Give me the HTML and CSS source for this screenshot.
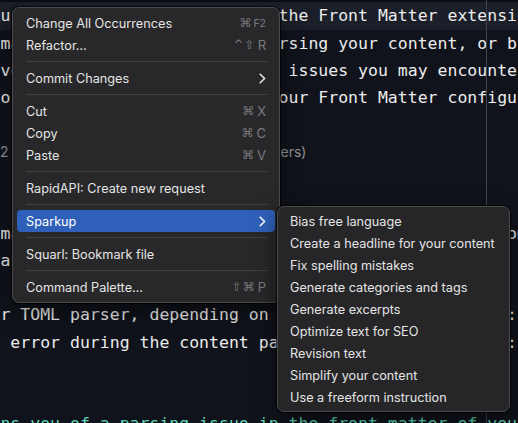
FILE: index.html
```html
<!DOCTYPE html>
<html>
<head>
<meta charset="utf-8">
<link rel="stylesheet" href="styles.css">
</head>
<body>
<div class="screen">
  <div class="topbar"></div>
  <div class="editor">
    <div class="ln current">ou can see issues when using the Front Matter extension and</div>
    <div class="ln"> matter errors when you do parsing your content, or building</div>
    <div class="ln">over some of the most typical issues you may encounter</div>
    <div class="ln"> or fix them by checking on your Front Matter configuration</div>
    <div class="ln"></div>
    <div class="ln"><span class="hint lead">2</span><span class="hint tail">ers)</span></div>
    <div class="ln"></div>
    <div class="ln"></div>
    <div class="ln"> make sure to validate your front matter contents from</div>
    <div class="ln"> as expected. The front matter will be parsed by</div>
    <div class="ln"></div>
    <div class="ln">or TOML parser, depending on the format that you use:</div>
    <div class="ln">n error during the content parsing process, it shows:</div>
    <div class="ln"></div>
    <div class="ln"></div>
    <div class="ln teal">rns you of a parsing issue in the front matter of your</div>
  </div>

  <div class="menu">
    <div class="item"><span>Change All Occurrences</span><span class="sc"><span class="mod">⌘</span><span class="k small">F2</span></span></div>
    <div class="item"><span>Refactor…</span><span class="sc"><span class="mod">^</span><span class="mod">⇧</span><span class="k">R</span></span></div>
    <div class="sep"></div>
    <div class="item"><span>Commit Changes</span><svg class="chev" width="7" height="11" viewBox="0 0 7 11"><path d="M1.2 1.2 L5.6 5.5 L1.2 9.8" fill="none" stroke="currentColor" stroke-width="1.6" stroke-linecap="round" stroke-linejoin="round"/></svg></div>
    <div class="sep"></div>
    <div class="item"><span>Cut</span><span class="sc"><span class="mod">⌘</span><span class="k">X</span></span></div>
    <div class="item"><span>Copy</span><span class="sc"><span class="mod">⌘</span><span class="k">C</span></span></div>
    <div class="item"><span>Paste</span><span class="sc"><span class="mod">⌘</span><span class="k">V</span></span></div>
    <div class="sep"></div>
    <div class="item"><span>RapidAPI: Create new request</span></div>
    <div class="sep"></div>
    <div class="item active"><span>Sparkup</span><svg class="chev" width="7" height="11" viewBox="0 0 7 11"><path d="M1.2 1.2 L5.6 5.5 L1.2 9.8" fill="none" stroke="currentColor" stroke-width="1.6" stroke-linecap="round" stroke-linejoin="round"/></svg></div>
    <div class="sep"></div>
    <div class="item"><span>Squarl: Bookmark file</span></div>
    <div class="sep"></div>
    <div class="item"><span>Command Palette…</span><span class="sc"><span class="mod">⇧</span><span class="mod">⌘</span><span class="k">P</span></span></div>
  </div>

  <div class="submenu">
    <div class="item">Bias free language</div>
    <div class="item">Create a headline for your content</div>
    <div class="item">Fix spelling mistakes</div>
    <div class="item">Generate categories and tags</div>
    <div class="item">Generate excerpts</div>
    <div class="item">Optimize text for SEO</div>
    <div class="item">Revision text</div>
    <div class="item">Simplify your content</div>
    <div class="item">Use a freeform instruction</div>
  </div>
</div>
</body>
</html>
```

FILE: styles.css
```css
html, body {
  margin: 0;
  padding: 0;
  background: #10131b;
}

.screen {
  position: relative;
  width: 518px;
  height: 423px;
  overflow: hidden;
  background: #10131b;
}

.screen::after {
  content: "";
  position: absolute;
  left: 486px;
  top: 0;
  width: 1px;
  height: 100%;
  background: #41444b;
}

.topbar {
  height: 2.4px;
  background: #0b0d12;
}

.editor {
  margin-left: -9.5px;
  font-family: "DejaVu Sans Mono", "Liberation Mono", monospace;
  font-size: 16.5px;
  color: #ececec;
}

.ln {
  height: 27.2px;
  line-height: 27.2px;
  white-space: pre;
}

.ln.current {
  background: #1b1f29;
  margin-left: 9.5px;
  text-indent: -9.5px;
}

.ln.teal {
  color: #5fd3b5;
}

.hint {
  font-family: Inter, "Noto Sans", sans-serif;
  font-size: 14px;
  color: #8e9198;
}

.hint.lead {
  margin-left: 9.5px;
}

.hint.tail {
  margin-left: 272px;
}

.menu {
  position: absolute;
  left: 12px;
  top: 7px;
  width: 268px;
  box-sizing: border-box;
  padding: 4px;
  background: #28282a;
  border: 1px solid #4b4b4e;
  border-radius: 7px;
  box-shadow: 0 0 0 1px rgba(0, 0, 0, 0.7), 0 8px 22px rgba(0, 0, 0, 0.5);
  font-family: Inter, "Noto Sans", sans-serif;
  font-size: 12.7px;
  color: #e4e4e4;
  z-index: 2;
}

.item {
  box-sizing: border-box;
  height: 22px;
  line-height: 21px;
  padding: 1px 9px 0;
  display: flex;
  align-items: center;
  justify-content: space-between;
  border-radius: 4px;
  white-space: nowrap;
}

.menu .item.active {
  background: #2f60b9;
  color: #ffffff;
}

.sep {
  height: 11px;
  margin: 0 8px 0 9px;
  display: flex;
  align-items: center;
}

.sep::before {
  content: "";
  display: block;
  width: 100%;
  height: 1px;
  background: #424245;
}

.sc {
  display: flex;
  align-items: center;
  gap: 1px;
  color: #7b7b7f;
  font-size: 13px;
}

.mod {
  font-family: "DejaVu Sans", Inter, sans-serif;
  font-size: 12px;
}

.k {
  margin-left: 2px;
  font-family: Inter, "Noto Sans", sans-serif;
}

.k.small {
  font-size: 10.5px;
  margin-left: 1px;
}

.chev {
  display: block;
}

.submenu {
  position: absolute;
  left: 277px;
  top: 206px;
  width: 233px;
  box-sizing: border-box;
  padding: 3px 4px;
  background: #262629;
  border: 1px solid #4a4a4d;
  border-radius: 7px;
  box-shadow: 0 0 0 1px rgba(0, 0, 0, 0.7), 0 8px 22px rgba(0, 0, 0, 0.5);
  font-family: Inter, "Noto Sans", sans-serif;
  font-size: 12.7px;
  color: #e4e4e4;
  z-index: 3;
}

.submenu .item {
  padding: 1px 8px 0;
}
```
